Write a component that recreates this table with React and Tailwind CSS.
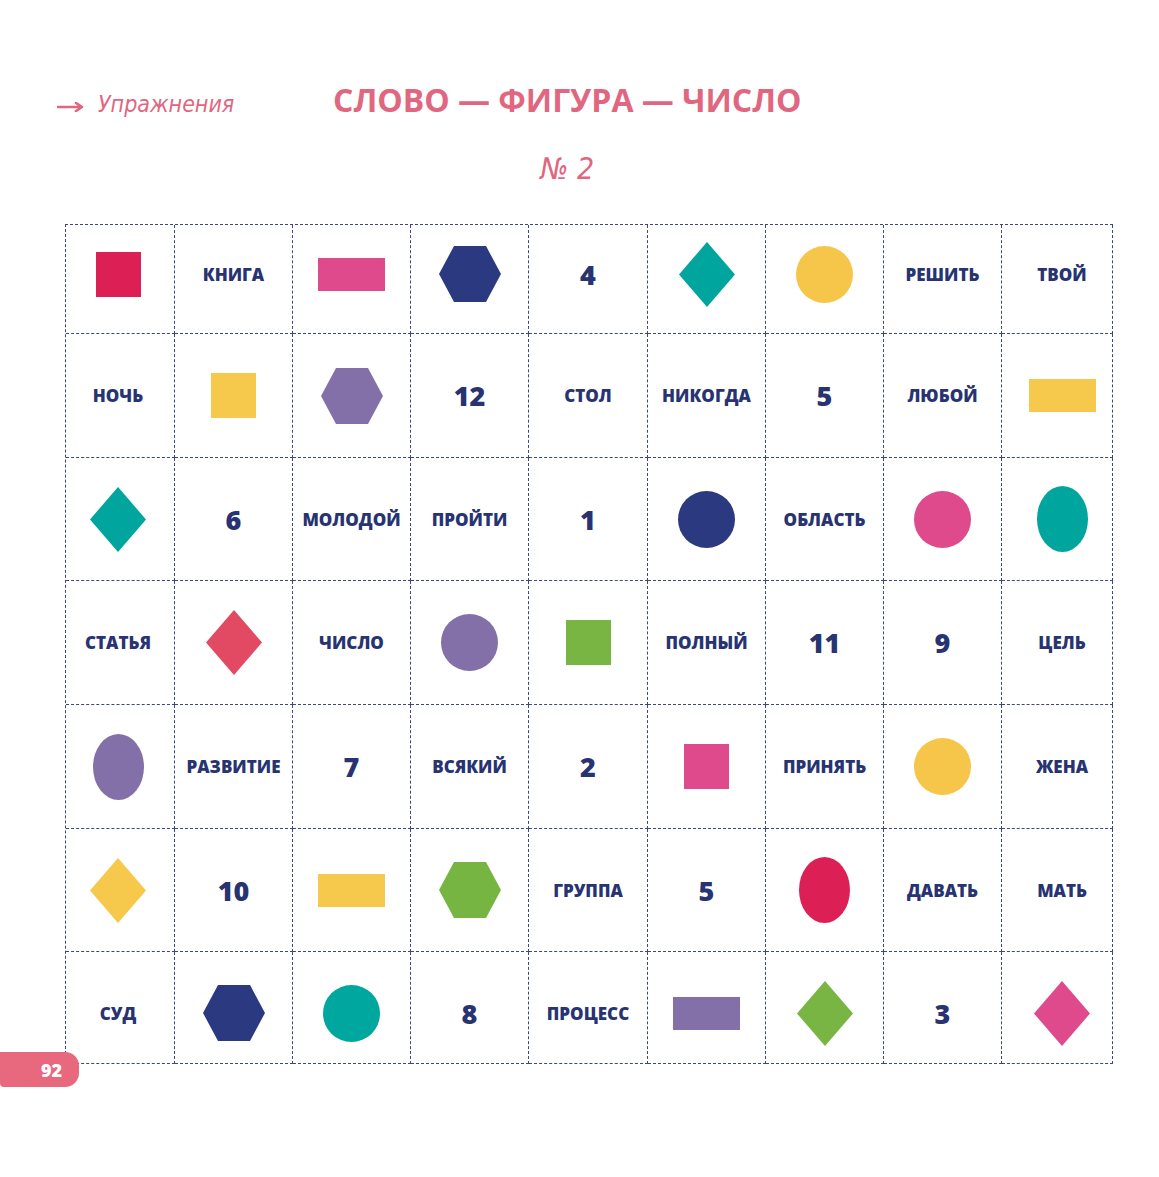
import clsx from 'clsx'

const PINK = '#e0677f'

// [kind, colour] for shapes, string for words, number for numbers
const rows = [
  [['sq', '#dc1f55'], 'КНИГА', ['rect', '#de4a8c'], ['hex', '#2b3a80'], 4, ['dia', '#00a59e'], ['circ', '#f6c64a'], 'РЕШИТЬ', 'ТВОЙ'],
  ['НОЧЬ', ['sq', '#f6c84b'], ['hex', '#8470a8'], 12, 'СТОЛ', 'НИКОГДА', 5, 'ЛЮБОЙ', ['rect', '#f6c84b']],
  [['dia', '#00a59e'], 6, 'МОЛОДОЙ', 'ПРОЙТИ', 1, ['circ', '#2b3a80'], 'ОБЛАСТЬ', ['circ', '#de4a8c'], ['ell', '#00a59e']],
  ['СТАТЬЯ', ['dia', '#e14a62'], 'ЧИСЛО', ['circ', '#8470a8'], ['sq', '#78b542'], 'ПОЛНЫЙ', 11, 9, 'ЦЕЛЬ'],
  [['ell', '#8470a8'], 'РАЗВИТИЕ', 7, 'ВСЯКИЙ', 2, ['sq', '#de4a8c'], 'ПРИНЯТЬ', ['circ', '#f6c64a'], 'ЖЕНА'],
  [['dia', '#f6c84b'], 10, ['rect', '#f6c84b'], ['hex', '#77b543'], 'ГРУППА', 5, ['ell', '#dc1f55'], 'ДАВАТЬ', 'МАТЬ'],
  ['СУД', ['hex', '#2b3a80'], ['circ', '#00a79e'], 8, 'ПРОЦЕСС', ['rect', '#8470a8'], ['dia', '#78b542'], 3, ['dia', '#de4a8c']],
]

function Shape({ kind, color }) {
  if (kind === 'sq') return <div className="h-[45px] w-[45px]" style={{ background: color }} />
  if (kind === 'rect') return <div className="h-[33px] w-[67px]" style={{ background: color }} />
  if (kind === 'circ') return <div className="h-[57px] w-[57px] rounded-full" style={{ background: color }} />
  if (kind === 'ell') return <div className="h-[66px] w-[51px] rounded-[50%]" style={{ background: color }} />
  if (kind === 'hex')
    return (
      <svg width="62" height="56" viewBox="0 0 62 56">
        <polygon points="0,28 15,0 47,0 62,28 47,56 15,56" fill={color} />
      </svg>
    )
  return (
    <svg width="56" height="65" viewBox="0 0 56 65">
      <polygon points="28,0 56,32.5 28,65 0,32.5" fill={color} />
    </svg>
  )
}

function Cell({ item }) {
  if (typeof item === 'number')
    return <span className="text-[27px] leading-none font-extrabold text-[#283372]">{item}</span>
  if (typeof item === 'string')
    return <span className="text-[17px] leading-none font-extrabold text-[#283372]">{item}</span>
  return <Shape kind={item[0]} color={item[1]} />
}

export default function App() {
  return (
    <div className="relative h-[1177px] w-full overflow-hidden bg-white font-['Open_Sans',sans-serif]">
      <header className="flex items-baseline pt-[84px] pl-[57px]">
        <div className="flex w-[276px] items-baseline gap-[14px]" style={{ color: PINK }}>
          <svg width="27" height="10" viewBox="0 0 27 10" className="self-center translate-y-[2px]">
            <path d="M1 5 H24 M19 1 L25 5 L19 9" stroke={PINK} strokeWidth="2.6" fill="none" strokeLinecap="round" strokeLinejoin="round" />
          </svg>
          <span className="font-['DejaVu_Sans',sans-serif] font-stretch-condensed text-[23px] italic leading-none">Упражнения</span>
        </div>
        <div className="flex flex-col items-center">
          <h1 className="text-[32px] font-bold leading-[32px]" style={{ color: PINK }}>
            СЛОВО — ФИГУРА — ЧИСЛО
          </h1>
          <div className="mt-[38px] font-['DejaVu_Sans',sans-serif] font-stretch-condensed text-[30px] italic leading-[30px]" style={{ color: PINK }}>
            № 2
          </div>
        </div>
      </header>

      <div className="ml-[65px] mt-[40px] grid w-[1048px] grid-cols-[109px_118px_118px_118px_119px_118px_118px_118px_111px] grid-rows-[109px_124px_123px_124px_124px_123px_112px] border-l border-t border-dashed border-[#3b4683]">
        {rows.map((row, r) =>
          row.map((item, c) => (
            <div
              key={r + '-' + c}
              className={clsx(
                'flex items-center justify-center border-r border-b border-dashed border-[#3b4683]',
                r === 0 && 'pb-[10px]',
                r === 6 && 'pt-[11px]',
                c === 0 && 'pr-[4px]',
                c === 8 && 'pl-[10px]'
              )}
            >
              <Cell item={item} />
            </div>
          ))
        )}
      </div>

      <div className="absolute left-0 top-[1052px] flex h-[35px] w-[79px] items-center justify-end rounded-r-[14px] rounded-bl-[4px] bg-[#e8687e] pr-[17px]">
        <span className="text-[18px] font-extrabold leading-none text-white">92</span>
      </div>
    </div>
  )
}
